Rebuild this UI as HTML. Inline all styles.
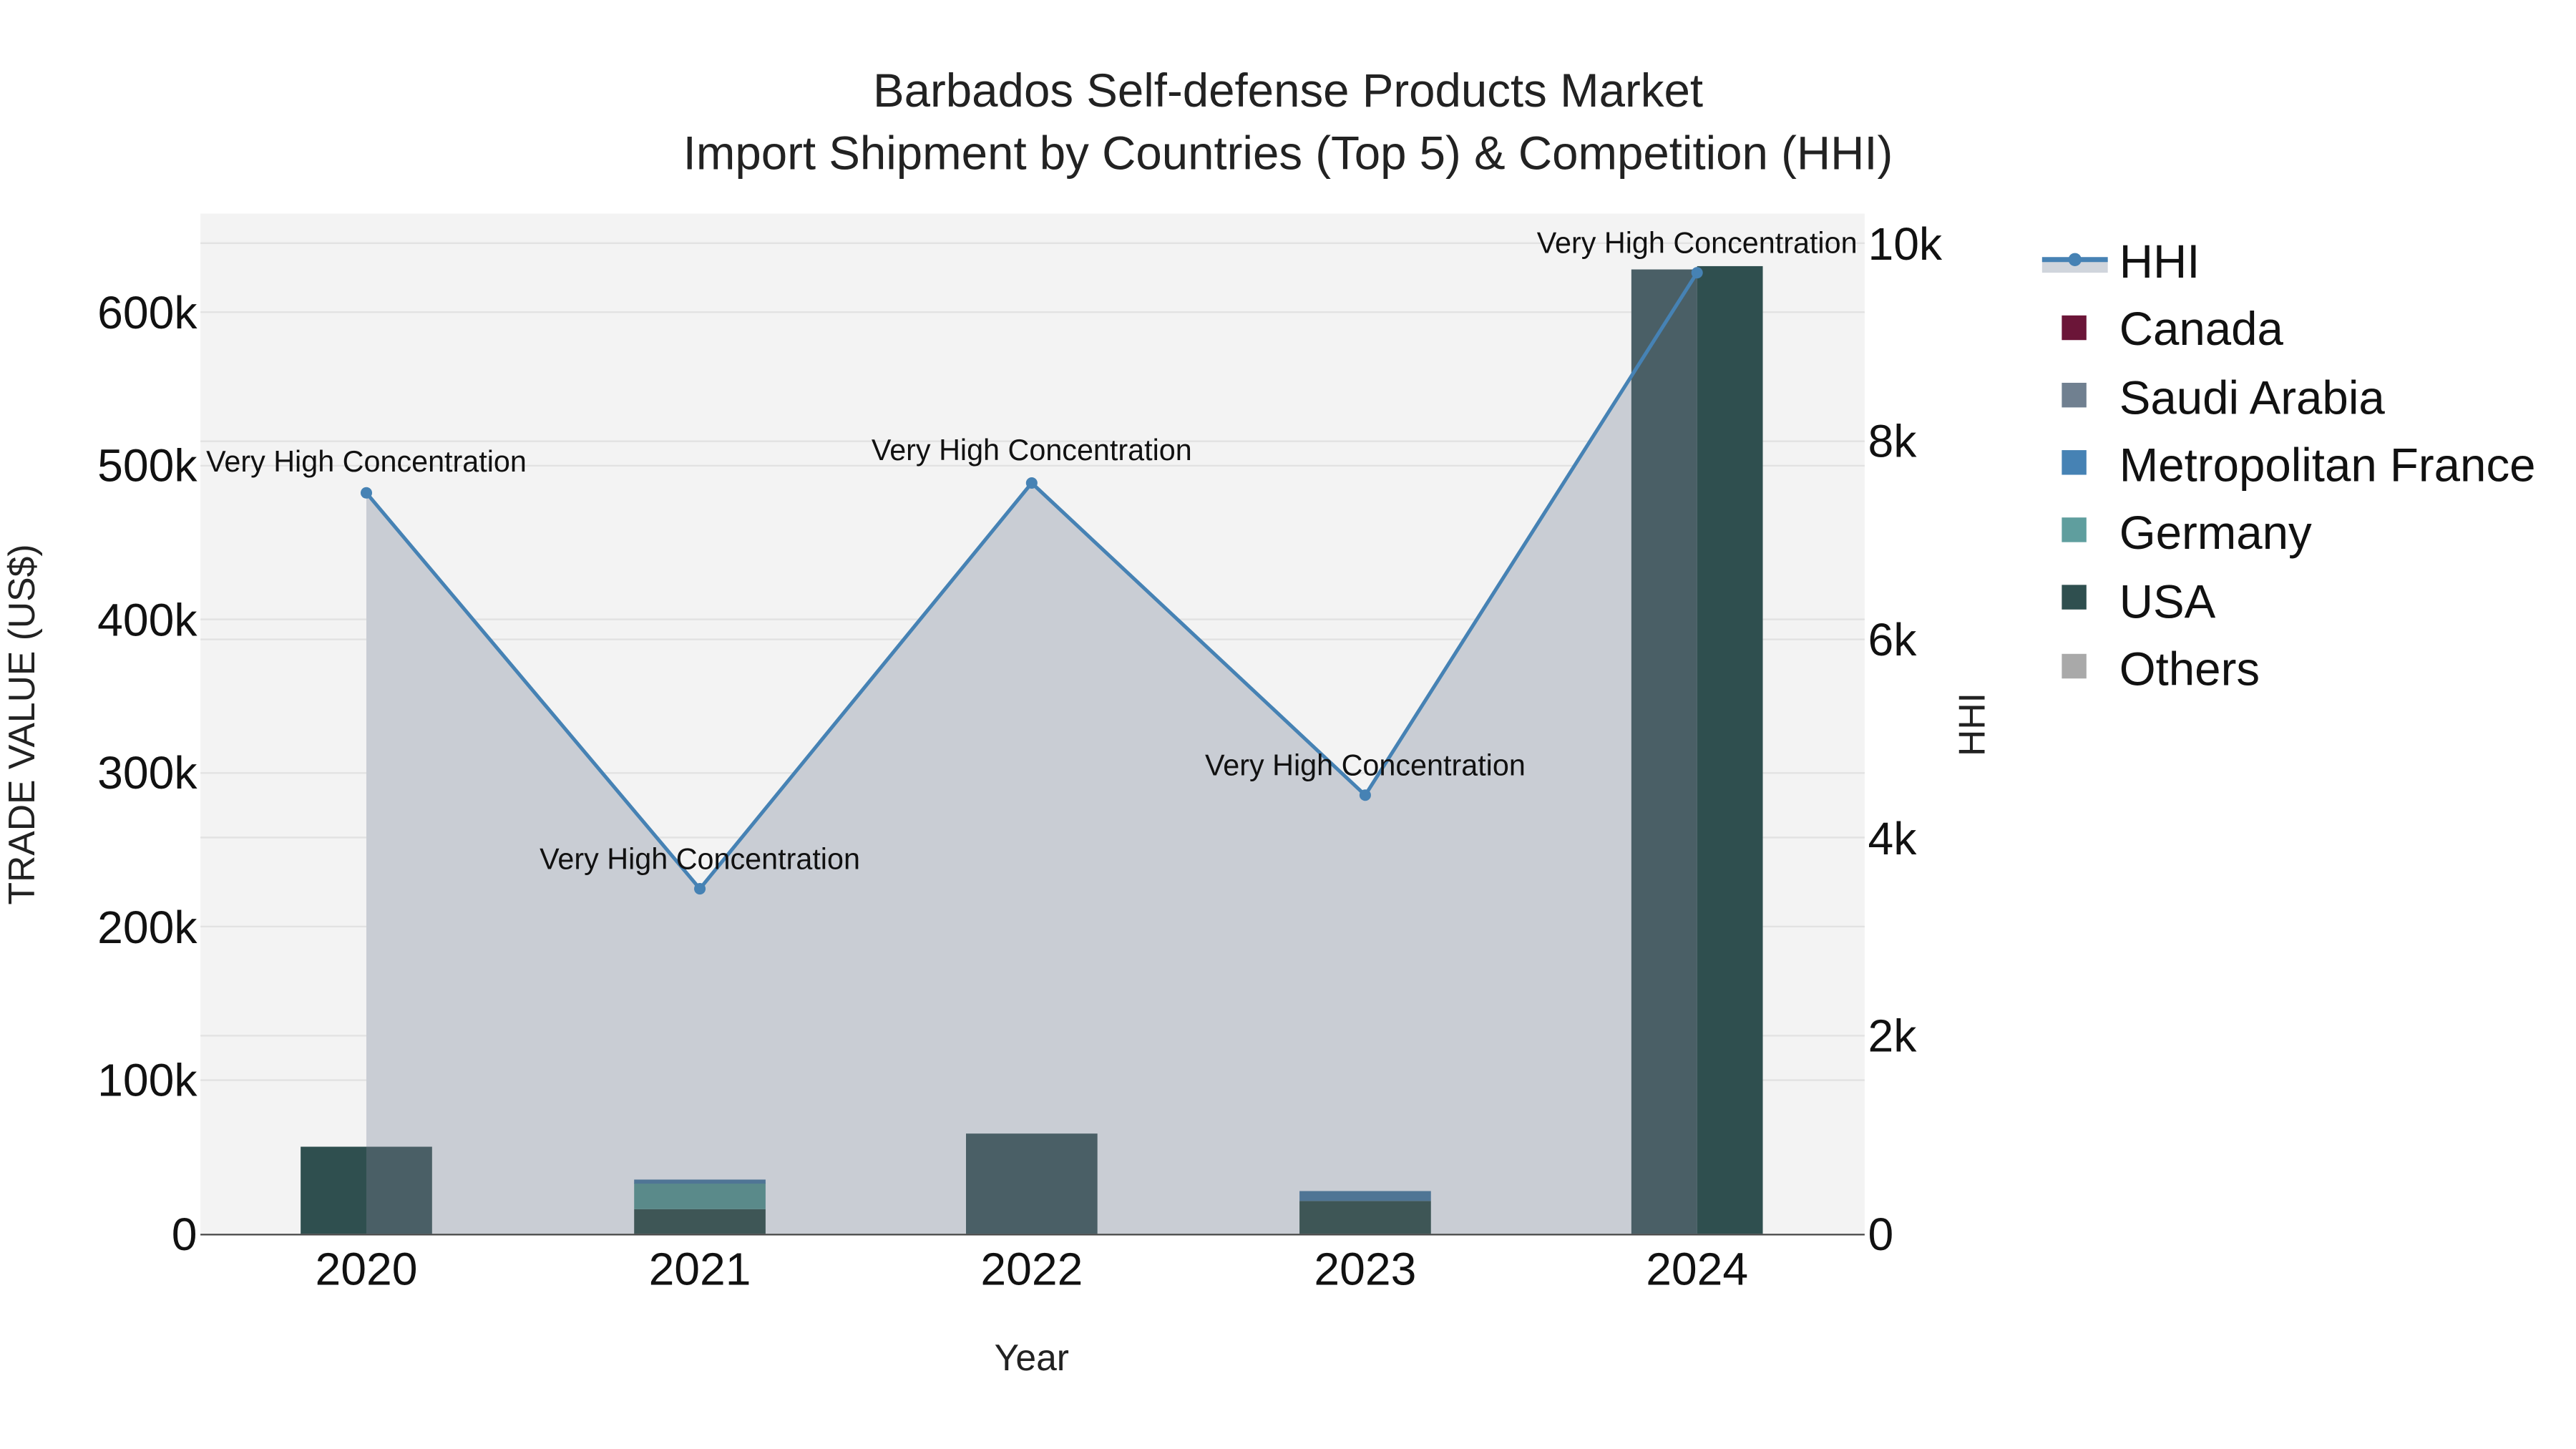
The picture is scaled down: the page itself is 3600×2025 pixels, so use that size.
<!DOCTYPE html>
<html><head><meta charset="utf-8"><style>html,body{margin:0;padding:0;background:#fff}svg{display:block}text{font-family:"Liberation Sans",sans-serif}</style></head><body>
<svg width="3600" height="2025" viewBox="0 0 1568 882" preserveAspectRatio="none" xmlns="http://www.w3.org/2000/svg">
<rect x="0" y="0" width="1568" height="882" fill="#fff"/>
<rect x="122" y="130" width="1013" height="621" fill="#f3f3f3"/>
<g stroke="#e2e2e2" stroke-width="1">
<line x1="122" x2="1135" y1="657.5" y2="657.5"/><line x1="122" x2="1135" y1="564" y2="564"/><line x1="122" x2="1135" y1="470.5" y2="470.5"/><line x1="122" x2="1135" y1="377" y2="377"/><line x1="122" x2="1135" y1="283.5" y2="283.5"/><line x1="122" x2="1135" y1="190" y2="190"/>
<line x1="122" x2="1135" y1="630.4" y2="630.4"/><line x1="122" x2="1135" y1="509.8" y2="509.8"/><line x1="122" x2="1135" y1="389.2" y2="389.2"/><line x1="122" x2="1135" y1="268.6" y2="268.6"/><line x1="122" x2="1135" y1="148" y2="148"/>
</g>
<polygon points="223,300 426,541 628,294 831,484 1033,166 1033,751 223,751" fill="#c9cdd4"/>
<rect x="183" y="698" width="40" height="53" fill="#2f4f4f"/>
<rect x="223" y="698" width="40" height="53" fill="#4a5f66"/>
<rect x="386" y="736" width="80" height="15" fill="#3e5656"/>
<rect x="386" y="720" width="80" height="16" fill="#5a8a8a"/>
<rect x="386" y="718" width="80" height="2.5" fill="#4f7595"/>
<rect x="588" y="690" width="80" height="61" fill="#4a5f66"/>
<rect x="791" y="731" width="80" height="20" fill="#3e5656"/>
<rect x="791" y="725" width="80" height="6" fill="#4f7595"/>
<rect x="993" y="164" width="40" height="587" fill="#4a5f66"/>
<rect x="1033" y="162" width="40" height="589" fill="#2f4f4f"/>
<line x1="122" x2="1135" y1="751.5" y2="751.5" stroke="#444" stroke-width="1"/>
<polyline points="223,300 426,541 628,294 831,484 1033,166" fill="none" stroke="#4682b4" stroke-width="2.2"/>
<g fill="#4682b4"><circle cx="223" cy="300" r="3.5"/><circle cx="426" cy="541" r="3.5"/><circle cx="628" cy="294" r="3.5"/><circle cx="831" cy="484" r="3.5"/><circle cx="1033" cy="166" r="3.5"/></g>
<g font-size="18" text-anchor="middle" fill="#111">
<text x="223" y="287">Very High Concentration</text>
<text x="426" y="529">Very High Concentration</text>
<text x="628" y="280">Very High Concentration</text>
<text x="831" y="472">Very High Concentration</text>
<text x="1033" y="154">Very High Concentration</text>
</g>
<g font-size="28.5" text-anchor="middle" fill="#222">
<text x="784" y="65">Barbados Self-defense Products Market</text>
<text x="784" y="103">Import Shipment by Countries (Top 5) &amp; Competition (HHI)</text>
</g>
<g font-size="28" text-anchor="end" fill="#111">
<text x="120" y="761">0</text><text x="120" y="667">100k</text><text x="120" y="574">200k</text><text x="120" y="480">300k</text><text x="120" y="387">400k</text><text x="120" y="293">500k</text><text x="120" y="200">600k</text>
</g>
<g font-size="28" text-anchor="start" fill="#111">
<text x="1137" y="761">0</text><text x="1137" y="640">2k</text><text x="1137" y="520">4k</text><text x="1137" y="399">6k</text><text x="1137" y="278">8k</text><text x="1137" y="158">10k</text>
</g>
<g font-size="28" text-anchor="middle" fill="#111">
<text x="223" y="782">2020</text><text x="426" y="782">2021</text><text x="628" y="782">2022</text><text x="831" y="782">2023</text><text x="1033" y="782">2024</text>
</g>
<text x="628" y="834" font-size="22.5" text-anchor="middle" fill="#222">Year</text>
<text transform="translate(21,441) rotate(-90)" font-size="22.5" text-anchor="middle" fill="#222">TRADE VALUE (US$)</text>
<text transform="translate(1208,441) rotate(-90)" font-size="22.5" text-anchor="middle" fill="#222">HHI</text>
<rect x="1243" y="158" width="40" height="8" fill="#d0d5dc"/>
<line x1="1243" x2="1283" y1="158" y2="158" stroke="#4682b4" stroke-width="3"/>
<circle cx="1263" cy="158" r="4" fill="#4682b4"/>
<rect x="1255" y="192" width="15" height="15" fill="#6b1538"/>
<rect x="1255" y="233" width="15" height="15" fill="#708090"/>
<rect x="1255" y="274" width="15" height="15" fill="#4682b4"/>
<rect x="1255" y="315" width="15" height="15" fill="#5f9e9e"/>
<rect x="1255" y="356" width="15" height="15" fill="#2f4f4f"/>
<rect x="1255" y="398" width="15" height="15" fill="#a9a9a9"/>
<g font-size="28.5" fill="#111">
<text x="1290" y="169">HHI</text><text x="1290" y="210">Canada</text><text x="1290" y="252">Saudi Arabia</text><text x="1290" y="293">Metropolitan France</text><text x="1290" y="334">Germany</text><text x="1290" y="376">USA</text><text x="1290" y="417">Others</text>
</g>
</svg>
</body></html>
